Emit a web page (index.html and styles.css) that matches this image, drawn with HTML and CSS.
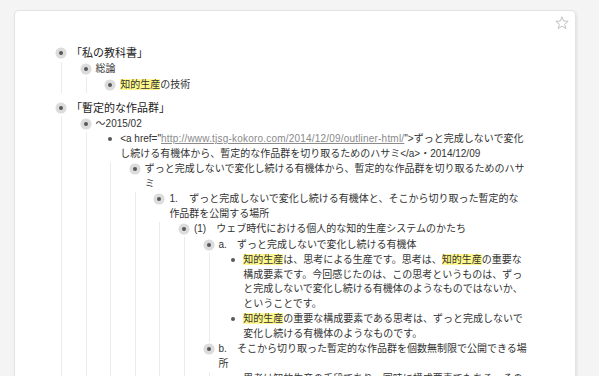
FILE: index.html
```html
<!DOCTYPE html>
<html lang="ja">
  <head>
    <meta charset="UTF-8" />
    <meta name="viewport" content="width=device-width,initial-scale=1.0" />
    <title>Outline</title>
    <link rel="stylesheet" href="styles.css">
  </head>
  <body>
    <div class="card">
      <svg class="star" width="14" height="14" viewBox="0 0 14 14">
        <polygon points="7,0.8 8.65,5.03 13.18,5.29 9.66,8.17 10.82,12.56 7,10.1 3.18,12.56 4.34,8.17 0.82,5.29 5.35,5.03" />
      </svg>

      <ul class="tree root">
        <li class="top">
          <div class="row"><span class="bullet halo"></span><span class="text">「私の教科書」</span></div>
          <ul class="tree">
            <li>
              <div class="row"><span class="bullet halo"></span><span class="text">総論</span></div>
              <ul class="tree">
                <li>
                  <div class="row"><span class="bullet halo"></span><span class="text"><mark>知的生産</mark>の技術</span></div>
                </li>
              </ul>
            </li>
          </ul>
        </li>

        <li class="top">
          <div class="row"><span class="bullet halo"></span><span class="text">「暫定的な作品群」</span></div>
          <ul class="tree">
            <li>
              <div class="row"><span class="bullet halo"></span><span class="text">～2015/02</span></div>
              <ul class="tree">
                <li>
                  <div class="row"><span class="bullet"></span><span class="text">&lt;a href="<a class="link" href="#">http://www.tjsg-kokoro.com/2014/12/09/outliner-html/</a>"&gt;ずっと完成しないで変化し続ける有機体から、暫定的な作品群を切り取るためのハサミ&lt;/a&gt;・2014/12/09</span></div>
                  <ul class="tree">
                    <li>
                      <div class="row"><span class="bullet halo"></span><span class="text">ずっと完成しないで変化し続ける有機体から、暫定的な作品群を切り取るためのハサミ</span></div>
                      <ul class="tree">
                        <li>
                          <div class="row"><span class="bullet halo"></span><span class="text"><span class="num">1.</span>ずっと完成しないで変化し続ける有機体と、そこから切り取った暫定的な作品群を公開する場所</span></div>
                          <ul class="tree">
                            <li>
                              <div class="row"><span class="bullet halo"></span><span class="text">(1)　ウェブ時代における個人的な知的生産システムのかたち</span></div>
                              <ul class="tree">
                                <li>
                                  <div class="row"><span class="bullet halo"></span><span class="text">a.　ずっと完成しないで変化し続ける有機体</span></div>
                                  <ul class="tree">
                                    <li>
                                      <div class="row"><span class="bullet"></span><span class="text"><mark>知的生産</mark>は、思考による生産です。思考は、<mark>知的生産</mark>の重要な構成要素です。今回感じたのは、この思考というものは、ずっと完成しないで変化し続ける有機体のようなものではないか、ということです。</span></div>
                                    </li>
                                    <li>
                                      <div class="row"><span class="bullet"></span><span class="text"><mark>知的生産</mark>の重要な構成要素である思考は、ずっと完成しないで変化し続ける有機体のようなものです。</span></div>
                                    </li>
                                  </ul>
                                </li>
                                <li>
                                  <div class="row"><span class="bullet halo"></span><span class="text">b.　そこから切り取った暫定的な作品群を個数無制限で公開できる場所</span></div>
                                  <ul class="tree">
                                    <li>
                                      <div class="row"><span class="bullet"></span><span class="text">思考は知的生産の手段であり、同時に構成要素でもある。その目的は作品を生み出すことです。</span></div>
                                    </li>
                                  </ul>
                                </li>
                              </ul>
                            </li>
                          </ul>
                        </li>
                      </ul>
                    </li>
                  </ul>
                </li>
              </ul>
            </li>
          </ul>
        </li>
      </ul>
    </div>
  </body>
</html>
```

FILE: styles.css
```css
* {
  padding: 0;
  margin: 0;
  box-sizing: border-box;
}
html,
body {
  height: 100%;
}
body {
  background-color: #f4f4f5;
  padding: 10px 23px 0 14px;
  font-family: 'Liberation Sans', 'Noto Sans CJK JP', sans-serif;
  font-size: 10px;
  color: #333;
  overflow: hidden;
}
.card {
  position: relative;
  min-height: 100%;
  background-color: #fff;
  border: 1px solid #e3e3e3;
  border-bottom: none;
  border-radius: 5px 5px 0 0;
  box-shadow: 1px 1px 3px rgba(0, 0, 0, 0.08);
  padding: 34px 48px 0 36px;
}
.star {
  position: absolute;
  top: 5px;
  right: 6px;
}
.star polygon {
  fill: none;
  stroke: #c2c2c2;
  stroke-width: 1;
  stroke-linejoin: round;
}
ul {
  list-style: none;
}
.tree .tree {
  margin-left: 10px;
  border-left: 1px solid #ebebeb;
  padding-left: 13.6px;
}
.top {
  margin-bottom: 7px;
}
.row {
  display: flex;
  align-items: flex-start;
}
.bullet {
  flex: none;
  width: 20px;
  height: 15.5px;
  display: flex;
  align-items: center;
  justify-content: center;
}
.bullet::before {
  content: '';
  width: 4px;
  height: 4px;
  border-radius: 50%;
  background-color: #585858;
}
.halo::before {
  box-shadow: 0 0 0 3.5px #dcdcdc;
}
.text {
  flex: 1;
  line-height: 14.5px;
  padding: 0.5px 0;
}
.num {
  display: inline-block;
  width: 19.8px;
}
.top > .row .text {
  font-size: 11px;
  line-height: 16.5px;
  padding: 0;
  color: #222;
}
.top > .row .bullet {
  height: 16.5px;
}
mark {
  background-color: #fff88c;
  color: inherit;
}
.link {
  color: #8a8a8a;
  text-decoration: underline;
  letter-spacing: 0.2px;
}
```
